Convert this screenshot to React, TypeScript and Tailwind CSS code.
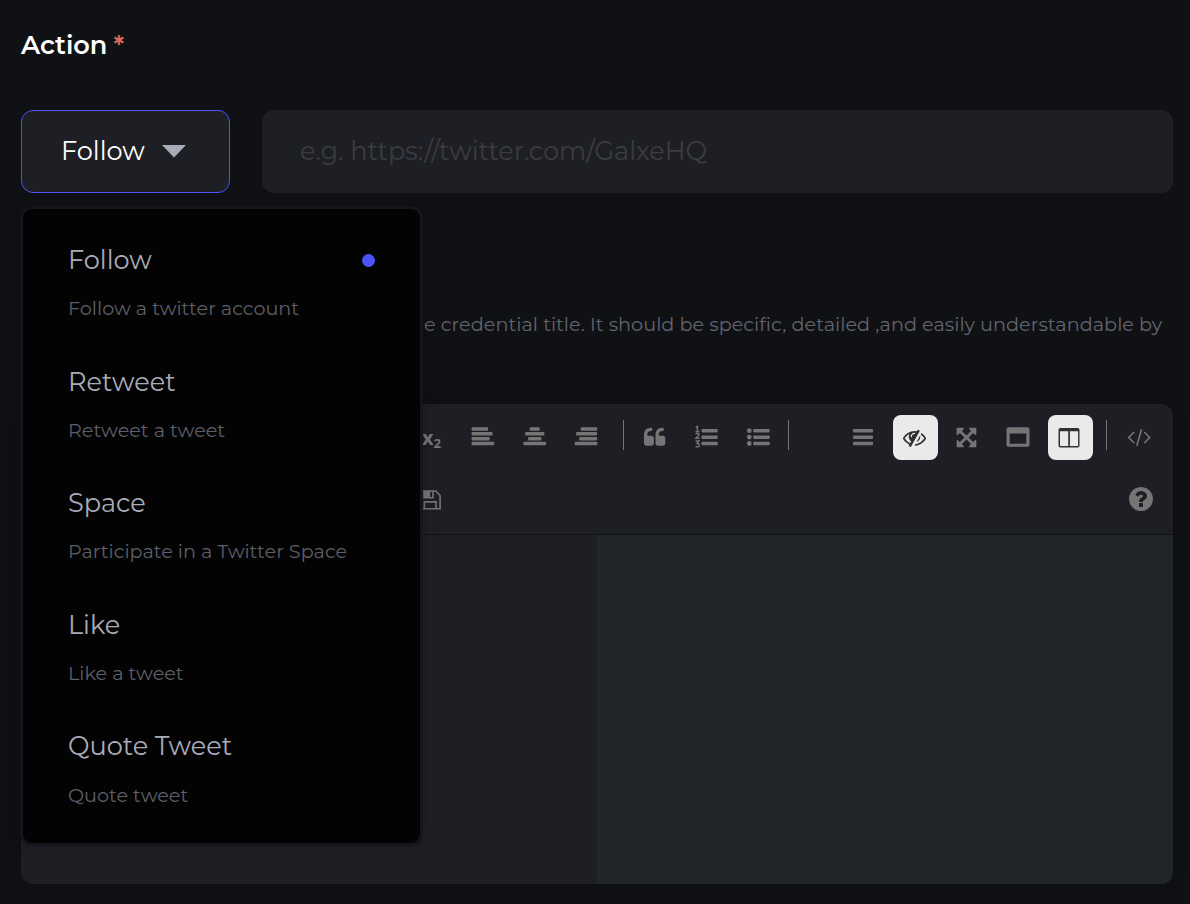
import React from "react";

type IconProps = { className?: string; children: React.ReactNode; box?: string };

function Icon({ className = "size-6", box = "0 0 24 24", children }: IconProps) {
  return (
    <svg viewBox={box} className={`block shrink-0 ${className}`} fill="currentColor" aria-hidden="true">
      {children}
    </svg>
  );
}

type Bar = [x: number, y: number, width: number];

function Bars({ rows, height = 3.5 }: { rows: Bar[]; height?: number }) {
  return (
    <>
      {rows.map(([x, y, width]) => (
        <rect key={y} x={x} y={y} width={width} height={height} rx={0.8} />
      ))}
    </>
  );
}

const AlignLeft = () => (
  <Icon>
    <Bars rows={[[0.6, 2.2, 16.5], [0.6, 7, 21], [0.6, 11.9, 18], [0.6, 16.7, 22.6]]} />
  </Icon>
);
const AlignCenter = () => (
  <Icon>
    <Bars rows={[[6.7, 2.2, 10], [2.1, 7, 19.3], [5.1, 11.9, 13.2], [0.4, 16.7, 22.6]]} />
  </Icon>
);
const AlignRight = () => (
  <Icon>
    <Bars rows={[[6.7, 2.2, 16.5], [2.1, 7, 21], [5.2, 11.9, 18], [0.7, 16.7, 22.6]]} />
  </Icon>
);
const Quote = () => (
  <Icon box="0 0 1792 1792" className="ml-[2px] size-[23px]">
    <path d="M768 960v384q0 80-56 136t-136 56h-384q-80 0-136-56t-56-136v-704q0-104 40.5-198.5t109.5-163.5 163.5-109.5 198.5-40.5h64q26 0 45 19t19 45v128q0 26-19 45t-45 19h-64q-106 0-181 75t-75 181v32q0 40 28 68t68 28h224q80 0 136 56t56 136zm896 0v384q0 80-56 136t-136 56h-384q-80 0-136-56t-56-136v-704q0-104 40.5-198.5t109.5-163.5 163.5-109.5 198.5-40.5h64q26 0 45 19t19 45v128q0 26-19 45t-45 19h-64q-106 0-181 75t-75 181v32q0 40 28 68t68 28h224q80 0 136 56t56 136z" />
  </Icon>
);
const OrderedList = () => (
  <Icon>
    <Bars rows={[[7.5, 3.9, 16.2], [7.5, 10.4, 16.2], [7.5, 16.8, 16.2]]} />
    <g fill="none" stroke="currentColor" strokeWidth={1.4}>
      <path d="M1.8 2.4 3.4 1.5V6.5M1.5 6.5h3.8" />
      <path d="M1.7 9.3q.5-1 1.7-1 1.6 0 1.6 1.3 0 1-3.1 3.7h3.6" />
      <path d="M1.7 16h3.2l-1.7 2.2q1.9 0 1.9 1.8 0 1.9-1.8 1.9-1.1 0-1.7-.5" />
    </g>
  </Icon>
);
const BulletList = () => (
  <Icon>
    <Bars rows={[[7.3, 3.9, 16.4], [7.3, 10.4, 16.4], [7.3, 16.8, 16.4]]} />
    <circle cx={3.3} cy={5.7} r={2.4} />
    <circle cx={3.3} cy={12.1} r={2.4} />
    <circle cx={3.3} cy={18.5} r={2.4} />
  </Icon>
);
const Menu = () => (
  <Icon>
    <Bars rows={[[2, 3.9, 20], [2, 10.4, 20], [2, 16.8, 20]]} />
  </Icon>
);
const EyeSlash = () => (
  <Icon box="0 0 1792 1792" className="size-[23px]">
    <path d="M555 1335l78-141q-87-63-136-159t-49-203q0-121 61-225-229 117-381 353 167 258 427 375zm389-759q0-20-14-34t-34-14q-125 0-214.5 89.5t-89.5 214.5q0 20 14 34t34 14 34-14 14-34q0-86 61-147t147-61q20 0 34-14t14-34zm363-191q0 7-1 9-106 189-316 567t-315 566l-49 89q-10 16-28 16-12 0-134-70-16-10-16-28 0-12 44-87-143-65-263.5-173t-208.5-245q-20-31-20-69t20-69q153-235 380-371t496-136q89 0 180 17l54-97q10-16 28-16 5 0 18 6t31 15.5 33 18.5 31.5 18.5 19.5 11.5q16 10 16 27zm37 447q0 139-79 253.5t-209 164.5l280-502q8 45 8 84zm448 128q0 35-20 69-39 64-109 145-150 172-347.5 267t-419.5 95l74-132q212-18 392.5-137t301.5-307q-115-179-282-294l63-112q95 64 182.5 153t144.5 182q20 34 20 69z" />
  </Icon>
);
const Expand = () => (
  <Icon box="0 0 1792 1792" className="size-[23px]">
    <path d="M1411 541l-355 355 355 355 144-144q29-31 70-14 39 17 39 59v448q0 26-19 45t-45 19h-448q-42 0-59-40-17-39 14-69l144-144-355-355-355 355 144 144q31 30 14 69-17 40-59 40h-448q-26 0-45-19t-19-45v-448q0-42 40-59 39-17 69 14l144 144 355-355-355-355-144 144q-19 19-45 19-12 0-24-5-40-17-40-59v-448q0-26 19-45t45-19h448q42 0 59 40 17 39-14 69l-144 144 355 355 355-355-144-144q-31-30-14-69 17-40 59-40h448q26 0 45 19t19 45v448q0 42-39 59-13 5-25 5-26 0-45-19z" />
  </Icon>
);
const Window = () => (
  <Icon>
    <path fillRule="evenodd" d="M2.5 2.2h19q2 0 2 2v15.5q0 2-2 2h-19q-2 0-2-2V4.2q0-2 2-2ZM3.7 8.6v10.1h16.6V8.6Z" />
  </Icon>
);
const Columns = () => (
  <Icon>
    <path fillRule="evenodd" d="M3.3 2.1h17.4q1.8 0 1.8 1.8v15.8q0 1.8-1.8 1.8H3.3q-1.8 0-1.8-1.8V3.9q0-1.8 1.8-1.8ZM3 5.2v14.3q0 .5.5.5h7.7V5.2Zm9.9 0v14.8h7.7q.5 0 .5-.5V5.2Z" />
  </Icon>
);
const Code = () => (
  <Icon>
    <path d="M7.2 7 1.7 12.5 7.2 18M17.2 7l5.5 5.5-5.5 5.5M14.6 4.3 9.8 20.7" fill="none" stroke="currentColor" strokeWidth={1.6} />
  </Icon>
);
const Floppy = () => (
  <Icon className="mt-[2px] size-6">
    <path d="M2.2 3h14.6l4.3 4.5v13.3H2.2ZM5.3 20.5v-6.6h11.7v6.6M5 3v6.7h9V3" fill="none" stroke="currentColor" strokeWidth={1.6} />
    <path d="M5 3h6.2v6h-6.2Z" />
  </Icon>
);
const Help = () => (
  <Icon box="128 128 1536 1536" className="size-6">
    <path d="M1024 1376v-192q0-14-9-23t-23-9h-192q-14 0-23 9t-9 23v192q0 14 9 23t23 9h192q14 0 23-9t9-23zm256-672q0-88-55.5-163t-138.5-116-170-41q-243 0-371 213-15 24 8 42l132 100q7 6 19 6 16 0 25-12 53-68 86-92 34-24 86-24 48 0 85.5 26t37.5 59q0 38-20 61t-68 45q-63 28-115.5 86.5t-52.5 125.5v36q0 14 9 23t23 9h192q14 0 23-9t9-23q0-19 21.5-49.5t54.5-49.5q32-18 49-28.5t46-35 44.5-48 28-60.5 12.5-81zm384 192q0 209-103 385.5t-279.5 279.5-385.5 103-385.5-103-279.5-279.5-103-385.5 103-385.5 279.5-279.5 385.5-103 385.5 103 279.5 279.5 103 385.5z" />
  </Icon>
);

function Tool({ active = false, children }: { active?: boolean; children: React.ReactNode }) {
  return (
    <button
      type="button"
      className={
        active
          ? "flex size-[45px] shrink-0 items-center justify-center rounded-lg bg-[#eaeaea] pr-[2px] text-[#303133]"
          : "flex size-[45px] shrink-0 items-center justify-center rounded-lg pr-px pb-px text-[#757575]"
      }
    >
      {children}
    </button>
  );
}

const Divider = ({ className }: { className: string }) => (
  <span className={`-mt-[5px] h-[30px] w-px shrink-0 bg-[#757575] ${className}`} />
);

const options = [
  { title: "Follow", note: "Follow a twitter account" },
  { title: "Retweet", note: "Retweet a tweet" },
  { title: "Space", note: "Participate in a Twitter Space" },
  { title: "Like", note: "Like a tweet" },
  { title: "Quote Tweet", note: "Quote tweet" },
];

function OptionMenu() {
  return (
    <ul className="absolute top-[206px] left-5 flex h-[640px] w-[403px] flex-col rounded-xl border-[3px] border-[#15161b] bg-[#030303] pt-[31px] pl-[45px] shadow-[0_0_14px_rgba(0,0,0,0.2)]">
      {options.map((option, index) => (
        <li key={option.title} className="h-[121.6px] shrink-0">
          <div className="flex h-10 items-center justify-between pr-[45px]">
            <span className="text-[25.6px] leading-10 whitespace-nowrap text-[#a9acb8]">{option.title}</span>
            {index === 0 && <span className="size-[13px] rounded-full bg-[#4a54f8]" />}
          </div>
          <p className="mt-[13.3px] text-[19.2px] leading-[30px] whitespace-nowrap text-[#5d5f69]">{option.note}</p>
        </li>
      ))}
    </ul>
  );
}

export default function App() {
  return (
    <main className="relative flex h-[904px] w-[1190px] flex-col overflow-hidden bg-[#101115] pr-[17px] pl-[21px] font-['Montserrat','Inter',sans-serif]">
      <h1 className="mt-[25px] flex h-10 items-center gap-1.5 text-[25.6px] font-semibold text-white">
        <span>Action</span>
        <span className="text-[#dc6a60]">*</span>
      </h1>

      <div className="mt-[45px] flex h-[83px] shrink-0 gap-8">
        <button type="button" className="flex w-[209px] items-center gap-[17.2px] rounded-xl border border-[#4a54f8] bg-[#1e1f24] pl-[39px] text-[25.6px] text-white">
          <span>Follow</span>
          <svg viewBox="0 0 24 13" className="h-[13px] w-6" aria-hidden="true">
            <path d="M0 0h24L12 12.5Z" fill="#a9acb8" />
          </svg>
        </button>
        <input
          type="text"
          placeholder="e.g. https://twitter.com/GalxeHQ"
          className="min-w-0 flex-1 rounded-xl bg-[#1e1f24] pl-[38px] text-[25.6px] text-white placeholder:text-[#3b3c41]"
        />
      </div>

      <p className="mt-[116px] h-[30px] shrink-0 pl-[403px] text-[19.2px] leading-[30px] tracking-[0.05px] whitespace-nowrap text-[#62646e]">
        e credential title. It should be specific, detailed ,and easily understandable by
      </p>

      <section className="mt-[65px] flex h-[480px] shrink-0 flex-col overflow-hidden rounded-xl bg-[#1e1f24] shadow-[0_0_14px_rgba(0,0,0,0.15)]">
        <div className="h-[131px] shrink-0 border-b border-[#101115] pt-[11px]">
          <div className="flex items-center pl-[388px]">
            <div className="flex gap-[6.8px]">
              <Tool>
                <span className="pt-px pl-px font-['Open_Sans',sans-serif] text-[20px] leading-none font-bold">
                  x<sub className="text-[13px]">2</sub>
                </span>
              </Tool>
              <Tool><AlignLeft /></Tool>
              <Tool><AlignCenter /></Tool>
              <Tool><AlignRight /></Tool>
            </div>
            <Divider className="mr-[8.7px] ml-[13.6px]" />
            <div className="flex gap-[6.8px]">
              <Tool><Quote /></Tool>
              <Tool><OrderedList /></Tool>
              <Tool><BulletList /></Tool>
            </div>
            <Divider className="ml-[6.8px]" />
            <div className="ml-[51.9px] flex gap-[6.65px]">
              <Tool><Menu /></Tool>
              <Tool active><EyeSlash /></Tool>
              <Tool><Expand /></Tool>
              <Tool><Window /></Tool>
              <Tool active><Columns /></Tool>
            </div>
            <Divider className="mr-[10.1px] ml-[13px]" />
            <Tool><Code /></Tool>
          </div>
          <div className="mt-[17px] flex items-center justify-between pr-[9.5px] pl-[388px]">
            <Tool><Floppy /></Tool>
            <Tool><Help /></Tool>
          </div>
        </div>
        <div className="grid flex-1 grid-cols-2">
          <div />
          <div className="bg-[#222529]" />
        </div>
      </section>

      <OptionMenu />
    </main>
  );
}
